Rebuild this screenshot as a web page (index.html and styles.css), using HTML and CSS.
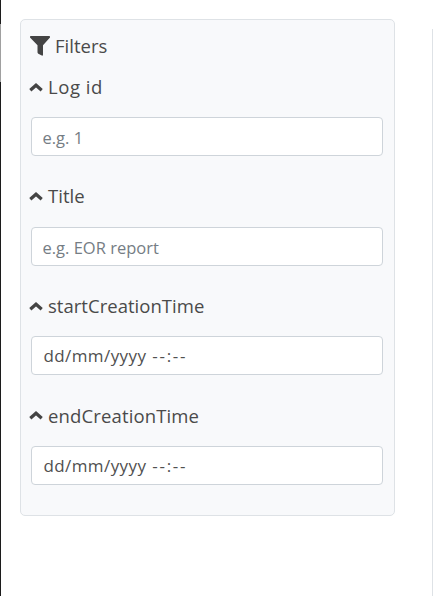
FILE: index.html
```html
<!DOCTYPE html>
<html lang="en">
<head>
<meta charset="utf-8">
<title>Filters</title>
<link rel="stylesheet" href="styles.css">
</head>
<body>
<div class="page">
  <div class="scroll-edge"><div class="scroll-thumb"></div></div>
  <form class="filters">
    <h2 class="heading">
      <svg class="funnel" viewBox="0 0 20 20"><path d="M.8 0H19.2Q20 0 20 .8V1.5L13 9.3V18.8Q12.8 20 11.8 19.6L8.3 17.7Q7.5 17.2 7.5 16.3V9.3L0 1.5V.8Q0 0 .8 0Z"/></svg>
      <span class="text">Filters</span>
    </h2>
    <div class="field">
      <label class="label" for="log"><svg class="chevron" viewBox="0 0 14 9"><path d="M1.3 7.2 7 2.3 12.7 7.2"/></svg><span class="text spaced">Log id</span></label>
      <input class="input" id="log" type="text" placeholder="e.g. 1">
    </div>
    <div class="field">
      <label class="label" for="title"><svg class="chevron" viewBox="0 0 14 9"><path d="M1.3 7.2 7 2.3 12.7 7.2"/></svg><span class="text">Title</span></label>
      <input class="input" id="title" type="text" placeholder="e.g. EOR report">
    </div>
    <div class="field">
      <label class="label" for="start"><svg class="chevron" viewBox="0 0 14 9"><path d="M1.3 7.2 7 2.3 12.7 7.2"/></svg><span class="text">startCreationTime</span></label>
      <div class="input date" id="start"><span class="day">dd/mm/yyyy</span><span class="time">--:--</span></div>
    </div>
    <div class="field">
      <label class="label" for="end"><svg class="chevron" viewBox="0 0 14 9"><path d="M1.3 7.2 7 2.3 12.7 7.2"/></svg><span class="text spaced-slightly">endCreationTime</span></label>
      <div class="input date" id="end"><span class="day">dd/mm/yyyy</span><span class="time">--:--</span></div>
    </div>
  </form>
  <div class="divider"></div>
</div>
</body>
</html>
```
FILE: styles.css
```css
* { box-sizing: border-box; }
body {
  margin: 0;
  background: #fff;
  color: #4a4a4a;
  font-family: "Open Sans", "Noto Sans", sans-serif;
  font-size: 18.5px;
}
.page { display: flex; height: 596px; overflow: hidden; }
.scroll-edge { width: 1px; background: #1c1c1c; padding-top: 24px; }
.scroll-thumb { height: 58px; background: #a0a0a0; }
.filters {
  width: 375px;
  height: 497px;
  margin: 19px 0 0 19px;
  padding: 13px 11px 0 10px;
  background: #f8f9fb;
  border: 1px solid #dee2e6;
  border-radius: 5px;
}
.heading {
  display: flex;
  align-items: center;
  gap: 5px;
  height: 26px;
  margin: 0;
  margin-left: -1px;
  font-size: 18.5px;
  font-weight: 400;
}
.text { padding-bottom: 1.4px; letter-spacing: 0.03px; }
.spaced { letter-spacing: 0.55px; }
.spaced-slightly { letter-spacing: 0.14px; }
.funnel { width: 20px; height: 20px; fill: #444; }
.field { height: 109.67px; padding-top: 15px; }
.label {
  display: flex;
  align-items: center;
  gap: 5px;
  height: 26px;
  margin-left: -2px;
  white-space: nowrap;
}
.chevron {
  width: 14px;
  height: 9px;
  fill: none;
  stroke: #444;
  stroke-width: 3.3;
}
.input {
  display: block;
  width: 352px;
  height: 39px;
  margin-top: 17px;
  padding: 2px 10.5px 0;
  background: #fff;
  border: 1px solid #ced4da;
  border-radius: 4px;
  color: #495057;
  font: 400 16.5px "Open Sans", "Noto Sans", sans-serif;
}
.input::placeholder { color: #757d84; opacity: 1; }
.date {
  display: flex;
  align-items: center;
  gap: 6px;
  padding-top: 0;
  padding-left: 11.5px;
  color: #505050;
  font-size: 17px;
}
.day { letter-spacing: 0.4px; }
.time { letter-spacing: 1.7px; }
.divider { width: 1px; margin: 29px 0 0 37px; background: #dee2e6; }
```
